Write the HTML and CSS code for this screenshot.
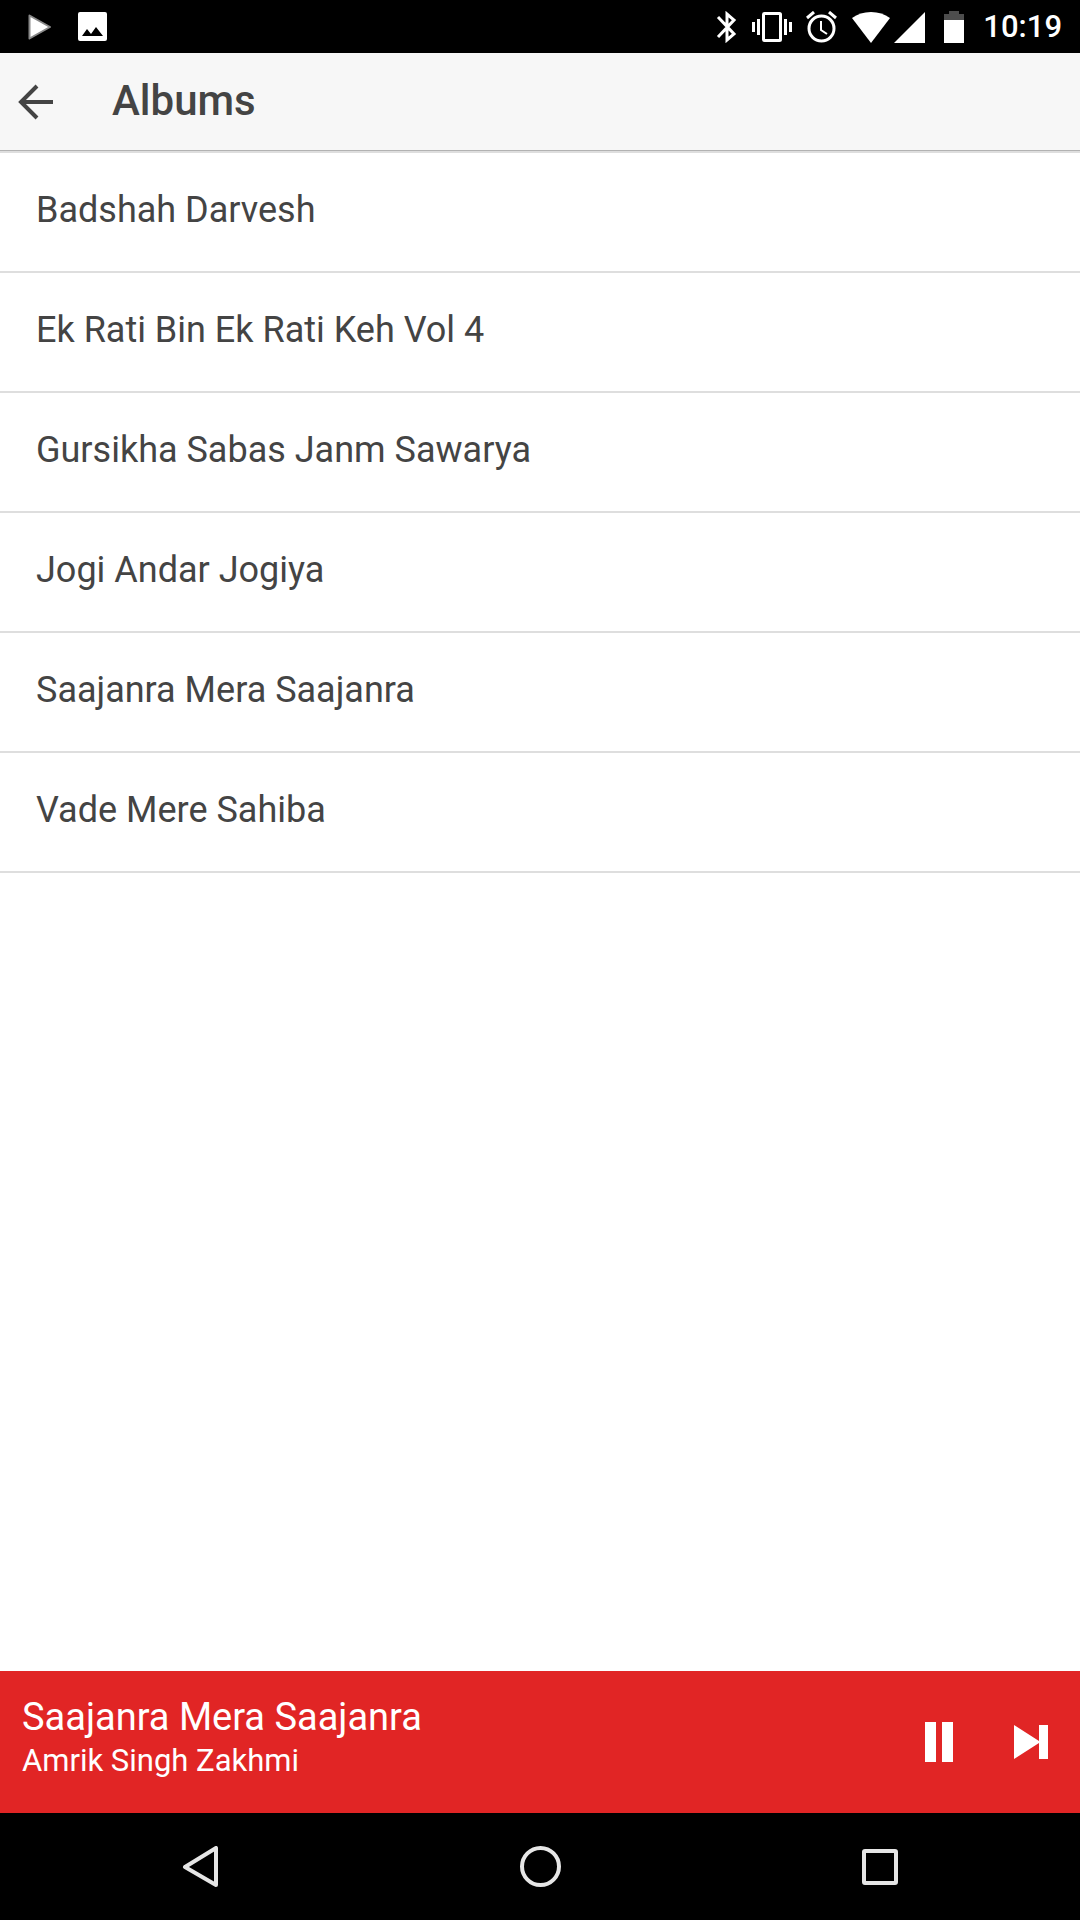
FILE: index.html
```html
<!DOCTYPE html>
<html lang="en">
<head>
    <title>Albums</title>
    <meta charset="utf-8">
    <meta name="viewport" content="width=device-width, initial-scale=1">
    <link rel="stylesheet" href="styles.css">
</head>
<body>
    <div class="status-bar">
        <div class="status-notifications">
            <svg width="24" height="28" viewBox="0 0 24 28">
                <path d="M1.500 2.500L22 14L1.500 25.500Z" fill="#fff" stroke="#8a8a8a" stroke-width="2" stroke-linejoin="round"/>
            </svg>
            <svg width="29" height="29" viewBox="0 0 29 29">
                <path fill="#fff" fill-rule="evenodd" d="M2 0h25a2 2 0 0 1 2 2v25a2 2 0 0 1-2 2h-25a2 2 0 0 1-2-2v-25a2 2 0 0 1 2-2zM4 24h21l-7-9-5 7-4-5z"/>
            </svg>
        </div>
        <div class="status-system">
            <svg width="22" height="32" viewBox="0 0 22 32">
                <path d="M2 6L18 23L11 29V3L18 9L2 26" fill="none" stroke="#fff" stroke-width="3"/>
            </svg>
            <svg width="40" height="32" viewBox="0 0 40 32">
                <rect x="11.500" y="2.500" width="17" height="27" rx="1" fill="none" stroke="#fff" stroke-width="3"/>
                <path d="M0 11h3v10H0zM5 8h3v16H5zM32 8h3v16h-3zM37 11h3v10h-3z" fill="#fff"/>
            </svg>
            <svg width="32" height="32" viewBox="0 0 32 32">
                <circle cx="15.500" cy="17.500" r="12.500" fill="none" stroke="#fff" stroke-width="3"/>
                <path d="M1 7L8 1M23 1L30 7" fill="none" stroke="#fff" stroke-width="3"/>
                <path d="M15 10v9l6 4" fill="none" stroke="#fff" stroke-width="2"/>
            </svg>
            <div class="status-network">
                <svg width="38" height="32" viewBox="0 0 38 32">
                    <path d="M0 7Q8 1 19 1T38 7L19 32Z" fill="#fff"/>
                </svg>
                <svg width="31" height="32" viewBox="0 0 31 32">
                    <path d="M31 1v31H0z" fill="#fff"/>
                </svg>
            </div>
            <svg width="30" height="32" viewBox="0 0 30 32">
                <path d="M10 0h10v3h5v6H5V3h5z" fill="#4d4d4d"/>
                <path d="M5 9h20v23H5z" fill="#fff"/>
            </svg>
            <span class="clock">10:19</span>
        </div>
    </div>

    <header>
        <button class="icon-button" type="button" aria-label="Back">
            <svg width="36" height="36" viewBox="0 0 36 36">
                <path d="M19 2L3 18L19 34M3 18H35" fill="none" stroke="#444" stroke-width="4"/>
            </svg>
        </button>
        <h1>Albums</h1>
    </header>

    <main>
        <ul class="album-list">
            <li><a href="#">Badshah Darvesh</a></li>
            <li><a href="#">Ek Rati Bin Ek Rati Keh Vol 4</a></li>
            <li><a href="#">Gursikha Sabas Janm Sawarya</a></li>
            <li><a href="#">Jogi Andar Jogiya</a></li>
            <li><a href="#">Saajanra Mera Saajanra</a></li>
            <li><a href="#">Vade Mere Sahiba</a></li>
        </ul>
    </main>

    <section class="player">
        <div class="player-track">
            <div class="player-title">Saajanra Mera Saajanra</div>
            <div class="player-artist">Amrik Singh Zakhmi</div>
        </div>
        <div class="player-controls">
            <button class="icon-button" type="button" aria-label="Pause">
                <svg width="28" height="40" viewBox="0 0 28 40">
                    <path d="M0 0h11v40H0zM17 0h11v40H17z" fill="#fff"/>
                </svg>
            </button>
            <button class="icon-button" type="button" aria-label="Next">
                <svg width="34" height="34" viewBox="0 0 34 34">
                    <path d="M0 0L25 16V0h9v34h-9V18L0 34z" fill="#fff"/>
                </svg>
            </button>
        </div>
    </section>

    <nav class="nav-bar">
        <button class="icon-button" type="button" aria-label="Back">
            <svg width="42" height="42" viewBox="0 0 42 42">
                <path d="M37 2V39L6 21Z" fill="none" stroke="#e6e6e6" stroke-width="4" stroke-linejoin="round"/>
            </svg>
        </button>
        <button class="icon-button" type="button" aria-label="Home">
            <svg width="42" height="42" viewBox="0 0 42 42">
                <circle cx="21.500" cy="20.500" r="18.500" fill="none" stroke="#e6e6e6" stroke-width="4"/>
            </svg>
        </button>
        <button class="icon-button" type="button" aria-label="Recent apps">
            <svg width="42" height="42" viewBox="0 0 42 42">
                <rect x="5" y="5" width="32" height="32" rx="1" fill="none" stroke="#e6e6e6" stroke-width="4"/>
            </svg>
        </button>
    </nav>
</body>
</html>
```
FILE: styles.css
```css
* {
    box-sizing: border-box;
}

body {
    display: flex;
    flex-direction: column;
    min-height: 100vh;
    margin: 0;
    background: #fff;
    font-family: Roboto, sans-serif;
    font-size: 36px;
    color: #444;
}

svg {
    display: block;
    flex: none;
}

.icon-button {
    display: flex;
    align-items: center;
    justify-content: center;
    margin: 0;
    padding: 0;
    border: 0;
    background: none;
    cursor: pointer;
}

/* status bar */
.status-bar {
    display: flex;
    align-items: center;
    justify-content: space-between;
    height: 53px;
    padding: 0 18px 0 28px;
    background: #000;
    color: #fff;
}

.status-notifications {
    display: flex;
    align-items: center;
    gap: 26px;
}

.status-system {
    display: flex;
    align-items: center;
    gap: 14px;
}

.status-network {
    display: flex;
    gap: 4px;
}

.clock {
    font-size: 31px;
    font-weight: 500;
    line-height: 32px;
}

/* header */
header {
    display: flex;
    align-items: center;
    gap: 58px;
    height: 98px;
    padding: 0 18px;
    background: #f7f7f7;
    border-bottom: 1px solid #b2b2b2;
}

h1 {
    margin: 0;
    padding-bottom: 2px;
    font-size: 42px;
    font-weight: 500;
    line-height: 48px;
}

/* albums */
main {
    flex: 1;
}

.album-list {
    margin: 0;
    padding: 0;
    list-style: none;
    border-top: 2px solid #dedede;
}

.album-list li {
    border-bottom: 2px solid #dedede;
}

.album-list a {
    display: block;
    padding: 36px 36px 40px;
    line-height: 42px;
    color: inherit;
    text-decoration: none;
}

/* player */
.player {
    display: flex;
    justify-content: space-between;
    height: 142px;
    padding: 0 32px 0 22px;
    background: #e12525;
    color: #fff;
}

.player-track {
    padding-top: 24px;
    line-height: 44px;
}

.player-title {
    font-size: 38px;
}

.player-artist {
    font-size: 31px;
}

.player-controls {
    display: flex;
    gap: 61px;
}

/* system navigation */
.nav-bar {
    display: flex;
    height: 107px;
    padding: 0 30px;
    background: #000;
}

.nav-bar .icon-button {
    flex: 1;
}
```
